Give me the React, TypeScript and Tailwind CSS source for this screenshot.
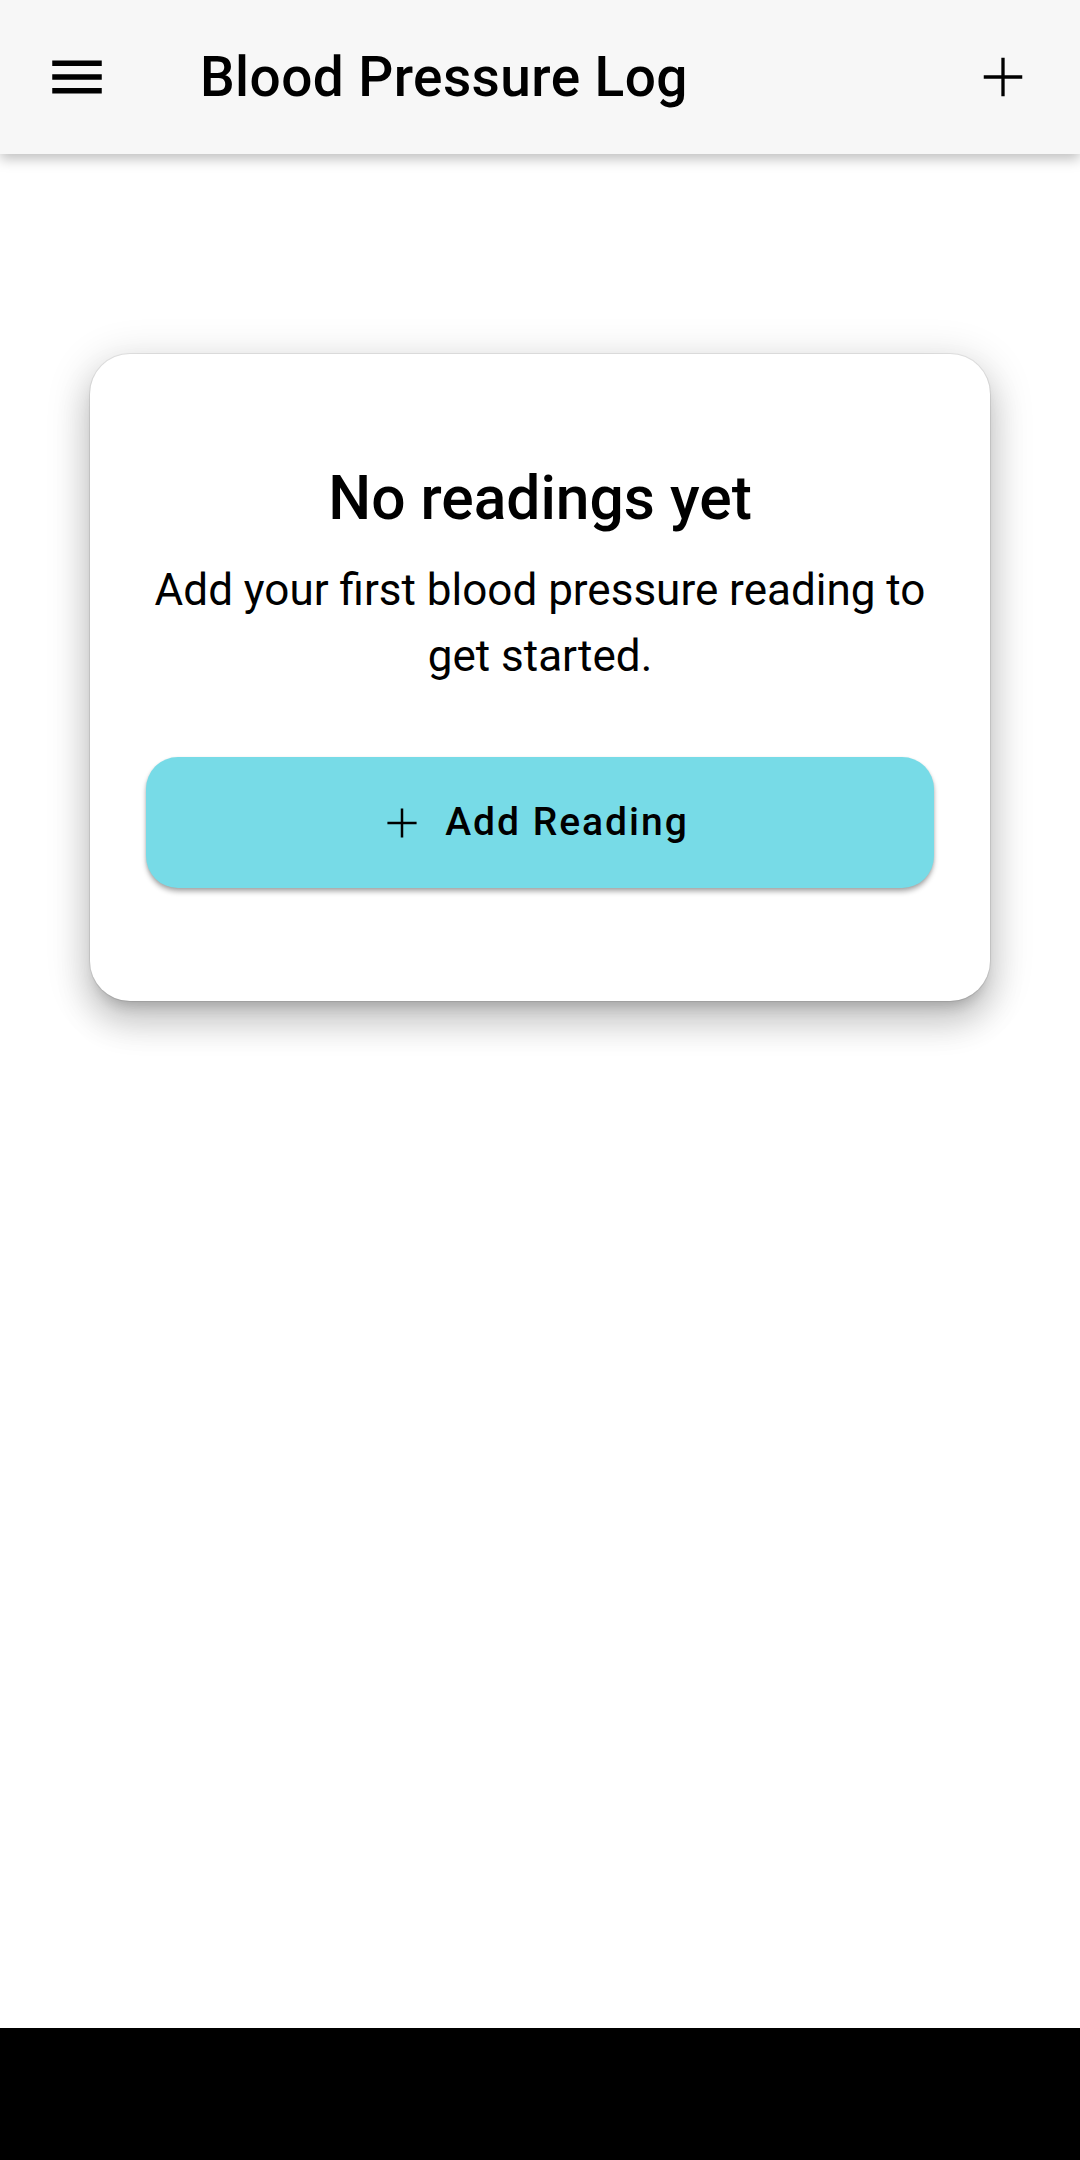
import React, { FC } from "react";

const MenuIcon: FC<{ className?: string }> = ({ className }) => (
  <svg viewBox="0 0 24 24" className={className} fill="currentColor">
    <path d="M3 18h18v-2H3v2zm0-5h18v-2H3v2zm0-7v2h18V6H3z" />
  </svg>
);

const AddIcon: FC<{ className?: string }> = ({ className }) => (
  <svg viewBox="0 0 24 24" className={className} fill="currentColor">
    <path d="M19 12.6h-6.4V19h-1.2v-6.4H5v-1.2h6.4V5h1.2v6.4H19v1.2z" />
  </svg>
);

const EmptyCard: FC = () => {
  return (
    <div className="mx-[90px] mt-[200px] rounded-[40px] bg-white px-[56px] pt-[104px] pb-[113px] shadow-[0_0_0_1px_rgba(0,0,0,0.08),0_11px_14px_-7px_rgba(0,0,0,0.2),0_22px_33px_3px_rgba(0,0,0,0.14),0_8px_40px_7px_rgba(0,0,0,0.12)]">
      <h2 className="text-center text-[60.5px] leading-[82px] font-medium text-black">
        No readings yet
      </h2>
      <p className="mt-[17px] text-center text-[44px] leading-[66px] text-black">
        Add your first blood pressure reading to get started.
      </p>
      <button className="mt-[68px] flex h-[131px] w-full items-center justify-center gap-[18px] rounded-[32px] bg-[#77dbe7] pr-[14px] text-black shadow-[0_4px_5px_rgba(0,0,0,0.28),0_1px_3px_rgba(0,0,0,0.12)]">
        <AddIcon className="h-[50px] w-[50px]" />
        <span className="text-[39px] font-medium tracking-[2px]">Add Reading</span>
      </button>
    </div>
  );
};

export default function App() {
  return (
    <div className="flex h-[2160px] w-[1080px] flex-col bg-white font-['Roboto',sans-serif]">
      <header className="relative z-10 flex h-[154px] shrink-0 items-center bg-[#f7f7f7] shadow-[0_5px_12px_rgba(0,0,0,0.25)]">
        <button className="ml-[44px] flex h-[66px] w-[66px] items-center justify-center text-black">
          <MenuIcon className="h-[66px] w-[66px]" />
        </button>
        <h1 className="ml-[90px] flex-1 text-[55px] font-medium tracking-[0.4px] text-black">
          Blood Pressure Log
        </h1>
        <button className="mr-[44px] flex h-[66px] w-[66px] items-center justify-center text-black">
          <AddIcon className="h-[70px] w-[70px]" />
        </button>
      </header>
      <main className="flex-1 bg-white">
        <EmptyCard />
      </main>
      <div className="h-[132px] shrink-0 bg-black" />
    </div>
  );
}
